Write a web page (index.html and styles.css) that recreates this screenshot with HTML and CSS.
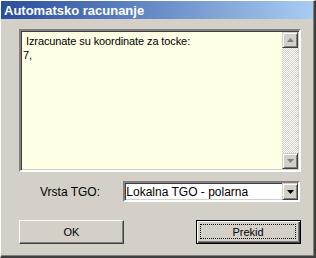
FILE: index.html
```html
<!DOCTYPE html>
<html>
<head>
<meta charset="utf-8">
<link rel="stylesheet" href="styles.css">
</head>
<body>
<div class="window">
  <div class="titlebar"><span class="title">Automatsko racunanje</span></div>
  <div class="content">
    <div class="memo">
      <div class="memo-text">&nbsp;Izracunate su koordinate za tocke:<br>7,</div>
      <div class="vscroll">
        <div class="sbtn"><svg width="7" height="4" viewBox="0 0 7 4"><polygon points="3.5,0 7,4 0,4" fill="#808080"/></svg></div>
        <div class="track"></div>
        <div class="sbtn"><svg width="7" height="4" viewBox="0 0 7 4"><polygon points="0,0 7,0 3.5,4" fill="#808080"/></svg></div>
      </div>
    </div>
    <div class="row">
      <span class="label">Vrsta TGO:</span>
      <div class="combo">
        <span class="combo-text">Lokalna TGO - polarna</span>
        <div class="cbtn"><svg width="7" height="4" viewBox="0 0 7 4"><polygon points="0,0 7,0 3.5,4" fill="#000"/></svg></div>
      </div>
    </div>
    <div class="buttons">
      <div class="btn"><span>OK</span></div>
      <div class="btn default"><div class="focus"><span>Prekid</span></div></div>
    </div>
  </div>
</div>
</body>
</html>
```
FILE: styles.css
```css
* { box-sizing: border-box; }
html, body { margin: 0; padding: 0; }
body { background: #d4d0c8; font-family: "Liberation Sans", Arial, sans-serif; }
.window {
  width: 316px; height: 258px;
  background: #d4d0c8;
  border-top: 1px solid #ffffff;
  border-left: 1px solid #ffffff;
  border-right: 2px solid #404040;
  border-bottom: 2px solid #404040;
  box-shadow: inset -1px -1px 0 #808080;
  padding: 0 1px 1px 0;
  display: flex; flex-direction: column;
}
.titlebar {
  height: 18px;
  background: linear-gradient(to right, #284d9c, #a8ccf2);
  display: flex; align-items: center;
  padding-left: 3px;
}
.title { color: #fff; font-weight: bold; font-size: 13px; }
.content { padding: 10px 13px 0 18px; display: flex; flex-direction: column; }
.memo {
  width: 282px; height: 143px;
  background: #ffffe6;
  border: 2px solid;
  border-color: #808080 #ffffff #ffffff #808080;
  box-shadow: inset 1px 1px 0 #404040, inset -1px -1px 0 #d4d0c8;
  display: flex;
}
.memo-text { flex: 1; font-size: 11px; letter-spacing: -0.1px; line-height: 14px; padding: 3px 0 0 2px; color: #000; }
.vscroll { width: 16px; display: flex; flex-direction: column; margin: 1px 1px 1px 0; }
.sbtn {
  height: 16px; background: #d4d0c8;
  border: 1px solid; border-color: #d4d0c8 #404040 #404040 #d4d0c8;
  box-shadow: inset 1px 1px 0 #fff, inset -1px -1px 0 #808080;
  display: flex; align-items: center; justify-content: center;
}
.track {
  flex: 1;
  background-color: #fff;
  background-image: repeating-conic-gradient(#d4d0c8 0 25%, #fff 0 50%);
  background-size: 2px 2px;
}
.row { display: flex; align-items: center; margin-top: 9px; }
.label { width: 105px; padding-left: 21px; font-size: 12px; color: #000; }
.combo {
  width: 178px; height: 21px;
  background: #fff;
  border: 2px solid;
  border-color: #808080 #ffffff #ffffff #808080;
  box-shadow: inset 1px 1px 0 #404040, inset -1px -1px 0 #d4d0c8;
  display: flex; align-items: center;
}
.combo-text { flex: 1; font-size: 12px; padding-left: 1px; }
.cbtn {
  width: 16px; height: 17px; margin-right: 0;
  border: 1px solid; border-color: #d4d0c8 #404040 #404040 #d4d0c8;
  box-shadow: inset 1px 1px 0 #fff, inset -1px -1px 0 #808080;
  background: #d4d0c8;
  display: flex; align-items: center; justify-content: center;
}
.buttons { display: flex; justify-content: space-between; margin-top: 18px; width: 282px; }
.btn {
  width: 105px; height: 24px;
  border: 1px solid; border-color: #fff #404040 #404040 #fff;
  box-shadow: inset -1px -1px 0 #808080;
  display: flex; align-items: center; justify-content: center;
  font-size: 11px; color: #000;
}
.btn.default {
  border: 1px solid #000;
  box-shadow: inset 1px 1px 0 #fff, inset -1px -1px 0 #404040, inset -2px -2px 0 #808080;
  padding: 3px 4px 4px 3px;
}
.focus {
  width: 100%; height: 100%;
  border: 1px dotted #000;
  display: flex; align-items: center; justify-content: center;
}
```
